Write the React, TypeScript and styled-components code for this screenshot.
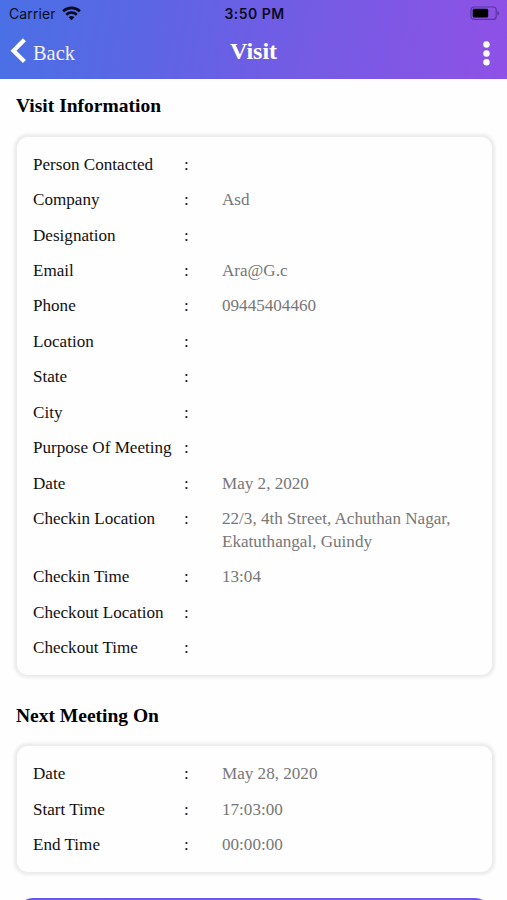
import React from "react";
import styled, { createGlobalStyle } from "styled-components";

const GlobalStyle = createGlobalStyle`
  * { box-sizing: border-box; }
  html, body { margin: 0; padding: 0; background: #fefefe; }
  body { font-family: "Liberation Serif", "Times New Roman", serif; color: #111; }
`;

const Screen = styled.div`
  width: 507px;
  height: 900px;
  overflow: hidden;
  background: #fefefe;
`;

const Header = styled.header`
  height: 79px;
  background: linear-gradient(100deg, #4a70e6 0%, #5b66e4 28%, #6d5ee4 50%, #7d58e5 74%, #8f50e6 100%);
`;

const StatusBar = styled.div`
  display: grid;
  grid-template-columns: 1fr auto 1fr;
  align-items: center;
  height: 27px;
  padding: 0 7px 0 9px;
  color: #0b0c25;
  font-family: Inter, "Liberation Sans", sans-serif;
  font-size: 14px;
  line-height: 27px;
`;

const Carrier = styled.div`
  display: flex;
  align-items: center;
  gap: 6px;
  letter-spacing: 0.1px;
`;

const Clock = styled.div`
  font-weight: 600;
  letter-spacing: 0.45px;
`;

const StatusRight = styled.div`
  display: flex;
  justify-content: flex-end;
`;

const NavBar = styled.nav`
  display: grid;
  grid-template-columns: 1fr auto 1fr;
  align-items: center;
  height: 49px;
  padding: 0 17px 0 10px;
  color: #fff;
`;

const BackButton = styled.button`
  display: flex;
  align-items: center;
  gap: 6px;
  padding: 0;
  border: 0;
  background: none;
  color: #f3f1ff;
  font: 20.4px/24px "Liberation Serif", serif;
`;

const BackLabel = styled.span`
  padding-top: 2px;
`;

const Title = styled.h1`
  margin: 0 0 1px 7px;
  font-size: 24px;
  line-height: 28px;
`;

const MenuButton = styled.button`
  display: flex;
  justify-content: flex-end;
  padding: 3px 0 0;
  border: 0;
  background: none;
`;

const Content = styled.main`
  padding: 15px 15px 0 17px;
`;

const SectionTitle = styled.h2`
  margin: 0 0 0 -1px;
  font-size: 19.5px;
  line-height: 24px;
  color: #000;
`;

const Card = styled.section<{ $height: number; $after: number }>`
  display: flex;
  flex-direction: column;
  gap: 12.34px;
  height: ${(p) => p.$height}px;
  margin: 18.6px 0 ${(p) => p.$after}px;
  padding: 16.15px 16px 0;
  border-radius: 11px;
  background: #fefefe;
  box-shadow: 0 0 3px 2.5px #ececec;
`;

const Row = styled.div`
  display: grid;
  grid-template-columns: 151px 38px 1fr;
  flex-shrink: 0;
  font-size: 17.1px;
  line-height: 23.1px;
`;

const Label = styled.span`
  white-space: nowrap;
`;

const Value = styled.span`
  color: #777;
  white-space: pre-line;
`;

const SubmitButton = styled.button`
  display: block;
  width: 474px;
  height: 46px;
  margin: 0;
  border: 0;
  border-radius: 16px;
  background: linear-gradient(90deg, #6759e3, #6f59e4);
`;

type Field = [string, string?];

const visitFields: Field[] = [
  ["Person Contacted"],
  ["Company", "Asd"],
  ["Designation"],
  ["Email", "Ara@G.c"],
  ["Phone", "09445404460"],
  ["Location"],
  ["State"],
  ["City"],
  ["Purpose Of Meeting"],
  ["Date", "May 2, 2020"],
  ["Checkin Location", "22/3, 4th Street, Achuthan Nagar,\nEkatuthangal, Guindy"],
  ["Checkin Time", "13:04"],
  ["Checkout Location"],
  ["Checkout Time"],
];

const meetingFields: Field[] = [
  ["Date", "May 28, 2020"],
  ["Start Time", "17:03:00"],
  ["End Time", "00:00:00"],
];

const Fields = ({ items }: { items: Field[] }) => (
  <>
    {items.map(([label, value]) => (
      <Row key={label}>
        <Label>{label}</Label>
        <span>:</span>
        <Value>{value}</Value>
      </Row>
    ))}
  </>
);

const WifiIcon = () => (
  <svg width="19" height="15" viewBox="0 0 19 15" fill="none" stroke="#080a20" strokeWidth="2.7">
    <path d="M1.1 5.3C6 .8 13 .8 17.9 5.3" />
    <path d="M4.2 8.7C7.3 5.9 11.7 5.9 14.8 8.7" />
    <path d="M9.5 14.2 6.6 11.2C8.2 9.7 10.8 9.7 12.4 11.2Z" fill="#080a20" stroke="none" />
  </svg>
);

const BatteryIcon = () => (
  <svg width="30" height="15" viewBox="0 0 30 15">
    <rect x="1" y="1" width="25.2" height="12.4" rx="3" fill="none" stroke="#59369f" strokeWidth="1.2" />
    <rect x="2.7" y="2.8" width="15.5" height="8.8" rx="1.5" fill="#000" />
    <path d="M27.4 5v4.6c2.4-.7 2.4-3.9 0-4.6Z" fill="#59369f" />
  </svg>
);

const BackIcon = () => (
  <svg width="17" height="27" viewBox="0 0 17 27" fill="none" stroke="#fff" strokeWidth="4.2">
    <path d="M14.4 1.8 3.5 12.7l10.9 10.9" />
  </svg>
);

const MoreIcon = () => (
  <svg width="7" height="25" viewBox="0 0 7 25" fill="#fff">
    <circle cx="3.5" cy="3.5" r="3.2" />
    <circle cx="3.5" cy="12.5" r="3.2" />
    <circle cx="3.5" cy="21.3" r="3.2" />
  </svg>
);

export default function App() {
  return (
    <Screen>
      <GlobalStyle />
      <Header>
        <StatusBar>
          <Carrier>Carrier <WifiIcon /></Carrier>
          <Clock>3:50 PM</Clock>
          <StatusRight><BatteryIcon /></StatusRight>
        </StatusBar>
        <NavBar>
          <BackButton><BackIcon /><BackLabel>Back</BackLabel></BackButton>
          <Title>Visit</Title>
          <MenuButton aria-label="More options"><MoreIcon /></MenuButton>
        </NavBar>
      </Header>
      <Content>
        <SectionTitle>Visit Information</SectionTitle>
        <Card $height={538.4} $after={28.6}>
          <Fields items={visitFields} />
        </Card>
        <SectionTitle>Next Meeting On</SectionTitle>
        <Card $height={126} $after={25.8}>
          <Fields items={meetingFields} />
        </Card>
        <SubmitButton aria-label="Submit" />
      </Content>
    </Screen>
  );
}
